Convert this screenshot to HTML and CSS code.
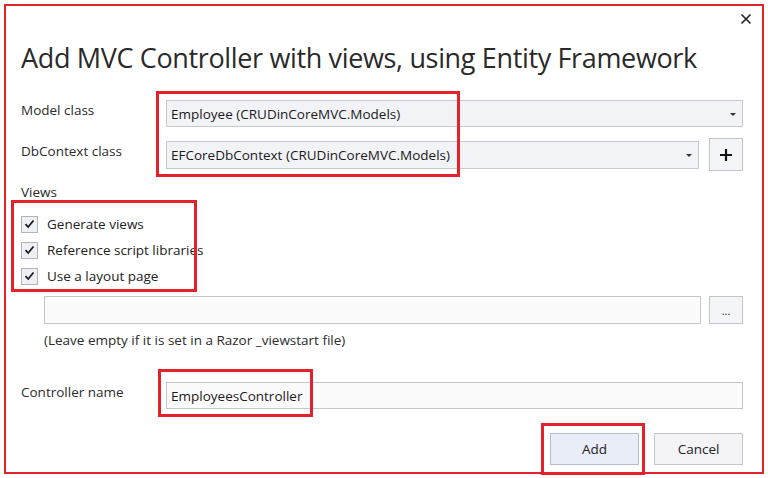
FILE: index.html
```html
<!DOCTYPE html>
<html>
<head>
<meta charset="utf-8">
<link rel="stylesheet" href="styles.css">
</head>
<body>
<div class="dialog">
  <div class="titlebar">
    <svg class="close" width="12" height="12" viewBox="0 0 12 12"><path d="M1.5 1.5 L10.5 10.5 M10.5 1.5 L1.5 10.5" stroke="#222" stroke-width="1.6" fill="none"/></svg>
  </div>
  <h1 class="title">Add MVC Controller with views, using Entity Framework</h1>

  <div class="row row-model">
    <div class="lbl">Model class</div>
    <div class="select grow">Employee (CRUDinCoreMVC.Models)<span class="arrow"></span></div>
  </div>
  <div class="row row-db">
    <div class="lbl">DbContext class</div>
    <div class="group">
      <div class="select grow">EFCoreDbContext (CRUDinCoreMVC.Models)<span class="arrow"></span></div>
      <div class="sqbtn plus"><svg width="14" height="14" viewBox="0 0 14 14"><path d="M7 1 V13 M1 7 H13" stroke="#111" stroke-width="2.2" fill="none"/></svg></div>
    </div>
  </div>

  <div class="views-label">Views</div>
  <div class="checks">
    <div class="check"><span class="box"><svg width="11" height="10" viewBox="0 0 11 10"><path d="M1.5 5.2 L4.2 8 L9.5 1.5" stroke="#1a1a1a" stroke-width="1.8" fill="none"/></svg></span>Generate views</div>
    <div class="check"><span class="box"><svg width="11" height="10" viewBox="0 0 11 10"><path d="M1.5 5.2 L4.2 8 L9.5 1.5" stroke="#1a1a1a" stroke-width="1.8" fill="none"/></svg></span>Reference script libraries</div>
    <div class="check"><span class="box"><svg width="11" height="10" viewBox="0 0 11 10"><path d="M1.5 5.2 L4.2 8 L9.5 1.5" stroke="#1a1a1a" stroke-width="1.8" fill="none"/></svg></span>Use a layout page</div>
  </div>

  <div class="layout-row">
    <div class="field grow"></div>
    <div class="sqbtn dots">...</div>
  </div>
  <div class="hint">(Leave empty if it is set in a Razor _viewstart file)</div>

  <div class="row row-ctrl">
    <div class="lbl">Controller name</div>
    <div class="field grow text">EmployeesController</div>
  </div>

  <div class="actions">
    <div class="btn add">Add</div>
    <div class="btn">Cancel</div>
  </div>

  <div class="mark m1"></div>
  <div class="mark m2"></div>
  <div class="mark m3"></div>
  <div class="mark m4"></div>
</div>
</body>
</html>
```

FILE: styles.css
```css
* { box-sizing: border-box; }
html, body { margin: 0; padding: 0; background: #fff; }
body {
  font-family: "Open Sans", "Noto Sans", sans-serif;
  color: #1e1e1e;
  width: 768px;
  height: 478px;
  overflow: hidden;
}
.dialog {
  position: relative;
  margin: 4px;
  width: 760px;
  height: 470px;
  border: 2px solid #e3222c;
  padding: 0 19px 0 15px;
  background: #fff;
}
.titlebar {
  height: 26px;
  display: flex;
  justify-content: flex-end;
  align-items: center;
  margin-right: -9px;
}
.close { display: block; }
.title {
  margin: 6px 0 0 0;
  font-weight: 400;
  font-size: 27px;
  line-height: 40px;
  color: #2a2a2a;
  letter-spacing: -0.35px;
  white-space: nowrap;
}
.row {
  display: flex;
  align-items: center;
}
.lbl {
  width: 145px;
  flex: none;
  font-size: 13.5px;
  color: #2b2b2b;
  padding-bottom: 7px;
}
.grow { flex: 1; }
.row-model { margin-top: 22px; height: 27px; }
.row-db { margin-top: 11px; height: 33px; }
.group { flex: 1; display: flex; align-items: center; gap: 10px; }
.select {
  position: relative;
  height: 27px;
  border: 1px solid #c9c9cf;
  background: #f2f3f7;
  font-size: 13.5px;
  color: #1a1a1a;
  display: flex;
  align-items: center;
  padding-left: 4px;
  white-space: nowrap;
}
.row-db .select { height: 28px; }
.arrow {
  position: absolute;
  right: 6px;
  top: 50%;
  margin-top: -1px;
  width: 0; height: 0;
  border-left: 3px solid transparent;
  border-right: 3px solid transparent;
  border-top: 3px solid #333;
}
.sqbtn {
  flex: none;
  width: 34px;
  height: 33px;
  border: 1px solid #c3c3c8;
  background: #f4f5f8;
  display: flex;
  align-items: center;
  justify-content: center;
}
.views-label {
  margin-top: 11px;
  font-size: 13.5px;
  line-height: 20px;
  color: #2b2b2b;
}
.checks { margin-top: 9px; }
.check {
  height: 26px;
  display: flex;
  align-items: center;
  font-size: 13.5px;
  color: #222;
}
.box {
  width: 17px;
  height: 17px;
  border: 1px solid #b3b3b8;
  background: #eef0f5;
  margin-right: 9px;
  display: flex;
  align-items: center;
  justify-content: center;
}
.layout-row {
  margin-top: 7px;
  margin-left: 23px;
  height: 28px;
  display: flex;
  gap: 8px;
}
.field {
  height: 28px;
  border: 1px solid #c6c6c6;
  background: #fbfbfc;
}
.dots {
  height: 28px;
  font-size: 11px;
  align-items: flex-end;
  padding-bottom: 7px;
  line-height: 1;
}
.hint {
  margin-top: 6px;
  margin-left: 23px;
  font-size: 13.5px;
  line-height: 20px;
  color: #2b2b2b;
}
.row-ctrl { margin-top: 32px; height: 27px; }
.text {
  height: 27px;
  display: flex;
  align-items: center;
  padding-left: 4px;
  font-size: 13.5px;
  color: #1a1a1a;
}
.actions {
  margin-top: 24px;
  display: flex;
  justify-content: flex-end;
  gap: 15px;
}
.btn {
  width: 89px;
  height: 32px;
  border: 1px solid #c5c5ca;
  background: #f4f4f6;
  display: flex;
  align-items: center;
  justify-content: center;
  font-size: 13.5px;
  color: #222;
}
.btn.add { background: #e9edf7; border-color: #b6bccb; }
.mark {
  position: absolute;
  border: 3px solid #e3222c;
}
.m1 { left: 150px; top: 85px; width: 304px; height: 86px; }
.m2 { left: 5px; top: 194px; width: 186px; height: 92px; }
.m3 { left: 152px; top: 363px; width: 155px; height: 48px; }
.m4 { left: 535px; top: 417px; width: 104px; height: 52px; }
```
